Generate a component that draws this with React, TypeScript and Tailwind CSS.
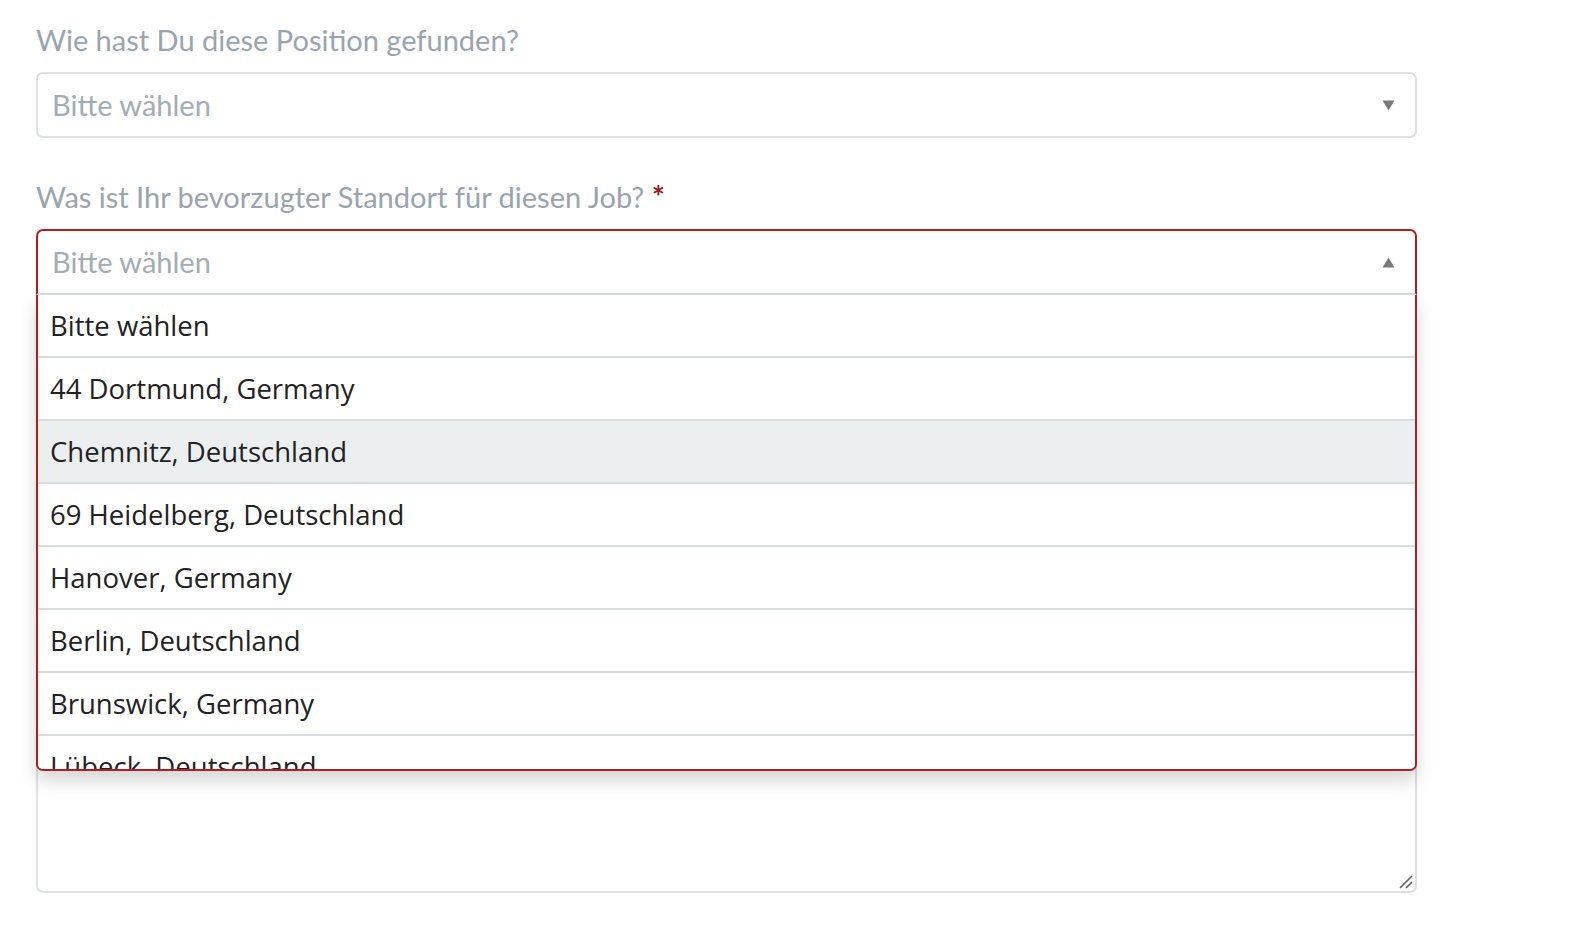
import React from "react";

const options = [
  "Bitte wählen",
  "44 Dortmund, Germany",
  "Chemnitz, Deutschland",
  "69 Heidelberg, Deutschland",
  "Hanover, Germany",
  "Berlin, Deutschland",
  "Brunswick, Germany",
  "Lübeck, Deutschland",
];

function Caret({ up }: { up?: boolean }) {
  return (
    <svg width="13" height="11" viewBox="0 0 13 11" className="block">
      {up ? (
        <polygon points="6.5,0.5 12.5,10.5 0.5,10.5" fill="#7a7a7a" />
      ) : (
        <polygon points="0.5,0.5 12.5,0.5 6.5,10.5" fill="#7a7a7a" />
      )}
    </svg>
  );
}

export default function App() {
  const lato = { fontFamily: "Lato, 'Open Sans', sans-serif" };
  const open = { fontFamily: "'Open Sans', 'Noto Sans', sans-serif" };
  return (
    <div className="min-h-[936px] w-[1588px] bg-white">
      <div className="w-[1417px] pl-[36px] pt-[22px]">
        <div
          className="text-[29px] leading-[36px] text-[#99a4ac]"
          style={lato}
        >
          Wie hast Du diese Position gefunden?
        </div>
        <div className="mt-[14px] flex h-[66px] items-center justify-between rounded-[7px] border-2 border-[#dde1e4] pl-[14px] pr-[20px]">
          <span className="text-[29px] text-[#a2acb3]" style={lato}>
            Bitte wählen
          </span>
          <Caret />
        </div>

        <div
          className="mt-[40px] text-[29px] leading-[36px] text-[#99a4ac]"
          style={lato}
        >
          Was ist Ihr bevorzugter Standort für diesen Job?{" "}
          <span className="text-[31px] font-bold text-[#a3161c]">*</span>
        </div>

        <div className="relative mt-[14px]">
          <div className="flex h-[66px] items-center justify-between rounded-t-[7px] border-x-2 border-t-2 border-b-2 border-x-[#b21d1d] border-t-[#b21d1d] border-b-[#d7dcdf] pl-[14px] pr-[20px]">
            <span className="text-[29px] text-[#a2acb3]" style={lato}>
              Bitte wählen
            </span>
            <Caret up />
          </div>

          {/* behind content: third field */}
          <div className="pt-[60px]">
            <div className="relative">
              <textarea
                className="block h-[538px] w-full resize-none rounded-[7px] border-2 border-[#dde1e4] bg-white outline-none"
                readOnly
              />
              <svg
                width="14"
                height="14"
                viewBox="0 0 14 14"
                className="absolute bottom-[4px] right-[4px]"
              >
                <line x1="1" y1="13" x2="13" y2="1" stroke="#5f5f5f" strokeWidth="1.6" />
                <line x1="7" y1="13" x2="13" y2="7" stroke="#5f5f5f" strokeWidth="1.6" />
              </svg>
            </div>
          </div>

          <div className="absolute left-0 right-0 top-[66px] z-10 h-[476px] overflow-hidden rounded-b-[7px] border-x-2 border-b-2 border-[#b21d1d] bg-white shadow-[0_10px_18px_rgba(0,0,0,0.16)]">
            {options.map((o, i) => (
              <div
                key={o}
                className={`flex h-[63px] items-center border-b-2 border-[#d7dcdf] pl-[12px] text-[27.5px] text-[#222222] ${
                  i === 2 ? "bg-[#eceff0]" : "bg-white"
                }`}
                style={open}
              >
                {o}
              </div>
            ))}
          </div>
        </div>
      </div>
    </div>
  );
}
